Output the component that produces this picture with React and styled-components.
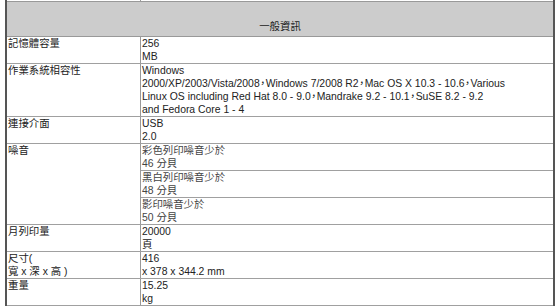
import React from "react";
import styled, { createGlobalStyle } from "styled-components";

const Global = createGlobalStyle`
  html, body { margin: 0; padding: 0; background: #fff; }
  body {
    font-family: "Liberation Sans", Arial, "Noto Sans CJK TC", sans-serif;
    font-size: 10.4px;
    line-height: 13px;
    color: #222;
  }
`;

const Table = styled.div`
  margin-left: 5px;
  width: 550px;
  border-left: 2px solid #555;
  border-right: 2px solid #555;
  box-sizing: border-box;
`;

const Stub = styled.div`
  display: grid;
  grid-template-columns: 133px 1fr;
  height: 1px;
  border-bottom: 1px solid #999;
  & > div + div { border-left: 1px solid #999; }
`;

const Header = styled.div`
  height: 35px;
  box-sizing: border-box;
  padding-top: 18px;
  background: #cccccc;
  border-bottom: 1px solid #999;
  text-align: center;
`;

const Row = styled.div`
  display: grid;
  grid-template-columns: 133px 1fr;
  border-bottom: 1px solid #a0a0a0;
`;

const Label = styled.div`
  padding-left: 1px;
`;

const Value = styled.div`
  border-left: 1px solid #999;
  padding-left: 1px;
  padding-right: 4px;
`;

const SubList = styled.div`
  border-left: 1px solid #999;
`;

const Sub = styled.div`
  padding-left: 1px;
  color: #444;
  & + & { border-top: 1px solid #a0a0a0; }
`;

const Comma = styled.span`
  font-family: "Noto Sans CJK TC", sans-serif;
  font-feature-settings: "halt" 1;
  line-height: 0;
  margin: 0 0.4px;
`;

const withCommas = (s) => {
  if (typeof s !== "string" || !s.includes("，")) return s;
  const parts = s.split("，");
  return parts.map((p, i) => (
    <React.Fragment key={i}>
      {p}
      {i < parts.length - 1 && <Comma>，</Comma>}
    </React.Fragment>
  ));
};

const rows = [
  ["記憶體容量", ["256", "MB"]],
  [
    "作業系統相容性",
    [
      "Windows",
      "2000/XP/2003/Vista/2008，Windows 7/2008 R2，Mac OS X 10.3 - 10.6，Various",
      "Linux OS including Red Hat 8.0 - 9.0，Mandrake 9.2 - 10.1，SuSE 8.2 - 9.2",
      "and Fedora Core 1 - 4",
    ],
  ],
  ["連接介面", ["USB", "2.0"]],
];

const rows2 = [
  ["月列印量", ["20000", "頁"]],
  [["尺寸(", "寬 x 深 x 高 )"], ["416", "x 378 x 344.2 mm"]],
  ["重量", ["15.25", "kg"]],
];

const noise = [
  ["彩色列印噪音少於", "46 分貝"],
  ["黑白列印噪音少於", "48 分貝"],
  ["影印噪音少於", "50 分貝"],
];

const Lines = ({ lines }) =>
  (Array.isArray(lines) ? lines : [lines]).map((l, i) => (
    <div key={i}>{withCommas(l)}</div>
  ));

export default function App() {
  return (
    <>
      <Global />
      <Table>
        <Stub>
          <div />
          <div />
        </Stub>
        <Header>一般資訊</Header>
        {rows.map(([k, v]) => (
          <Row key={k}>
            <Label>
              <Lines lines={k} />
            </Label>
            <Value>
              <Lines lines={v} />
            </Value>
          </Row>
        ))}
        <Row>
          <Label>噪音</Label>
          <SubList>
            {noise.map(([a, b]) => (
              <Sub key={a}>
                <div>{a}</div>
                <div>{b}</div>
              </Sub>
            ))}
          </SubList>
        </Row>
        {rows2.map(([k, v], i) => (
          <Row key={i}>
            <Label>
              <Lines lines={k} />
            </Label>
            <Value>
              <Lines lines={v} />
            </Value>
          </Row>
        ))}
      </Table>
    </>
  );
}
